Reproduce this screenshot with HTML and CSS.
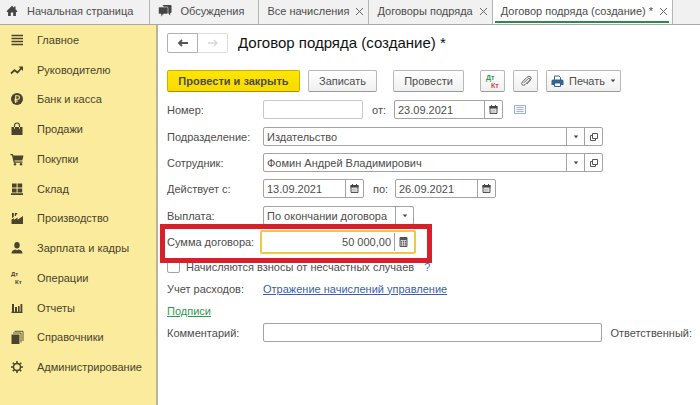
FILE: index.html
```html
<!DOCTYPE html>
<html lang="ru">
<head>
<meta charset="utf-8">
<title>Договор подряда (создание) *</title>
<link rel="stylesheet" href="styles.css">
</head>
<body>
<svg class="defs" aria-hidden="true">
  <symbol id="cal" viewBox="0 0 9 9"><path d="M1 1.500h7v7H1z" fill="#ddd" stroke="#555"/><path d="M.5 1h8v2.500h-8zM2 0h1v2H2zM6 0h1v2H6z" fill="#444"/><path d="M2.500 5.500h4M2.500 7h4" stroke="#999" stroke-width=".8" stroke-dasharray="1 1"/></symbol>
  <symbol id="open" viewBox="0 0 10 10"><path d="M3.500 1.500h5v5h-5zM3 3.500H1.500v5h5V7" fill="none" stroke="#555"/></symbol>
  <symbol id="drop" viewBox="0 0 6 4"><path d="M.8.5h4.400L3 3.300z" fill="#444"/></symbol>
</svg>
<nav class="tabs">
  <a class="tab home" href="#"><svg width="12" height="12" viewBox="0 0 12 12"><path d="M6 .8L.5 6.300l1 .9.6-.5V11h2.700V7.500h2.400V11h2.700V6.700l.6.5 1-.9L9.500 4.200V1.500H8v1.200z" fill="#444"/></svg>Начальная страница</a>
  <a class="tab talk" href="#"><svg width="14" height="14" viewBox="0 0 14 14"><path d="M4.500 1h8q1 0 1 1v6q0 1-1 1h-.3v2.500L10 9" fill="#444"/><path d="M1.500 3h7.500q1 0 1 1v5q0 1-1 1H5.500L3 13v-3H1.500q-1 0-1-1V4q0-1 1-1z" fill="#444" stroke="#eee" stroke-width=".6"/></svg>Обсуждения</a>
  <a class="tab" href="#">Все начисления<span class="x"></span></a>
  <a class="tab" href="#">Договоры подряда<span class="x"></span></a>
  <a class="tab active" href="#" aria-current="page">Договор подряда (создание) *<span class="x"></span></a>
</nav>
<div class="app">
  <nav class="side">
    <a href="#"><svg viewBox="0 0 14 14"><path d="M1.500 2.500h11.500M1.500 5.500h11.500M1.500 8.500h11.500M1.500 11.500h11.500" stroke="#4a442e" stroke-width="1.600"/></svg>Главное</a>
    <a href="#"><svg viewBox="0 0 14 14"><path d="M1 10.500l3.500-3.300L7.500 9.500 11.500 5" fill="none" stroke="#4a442e" stroke-width="1.800"/><path d="M8.500 3.500H13V8z" fill="#4a442e"/></svg>Руководителю</a>
    <a href="#"><svg viewBox="0 0 14 14"><circle cx="7" cy="7" r="6" fill="#4a442e"/><path d="M5.700 11V3.800h2q1.800 0 1.800 1.700T7.700 7.200H4.300M4.300 9h3.600" fill="none" stroke="#fbeb9c" stroke-width="1.100"/></svg>Банк и касса</a>
    <a href="#"><svg viewBox="0 0 14 14"><path d="M1.500 5h11v8h-11z" fill="#4a442e"/><path d="M4.500 7V3.500q0-2.500 2.500-2.500t2.500 2.500V7" fill="none" stroke="#4a442e" stroke-width="1.100"/><path d="M4.500 5v1.800M9.500 5v1.800" stroke="#fbeb9c" stroke-width=".8"/></svg>Продажи</a>
    <a href="#"><svg viewBox="0 0 14 14"><path d="M.5 2h2.300l.6 1.500h10.100l-1.200 5H4.500l.3 1h7.700v1.200H3.700L2 3.200H.5z" fill="#4a442e"/><circle cx="5" cy="12.300" r="1.200" fill="#4a442e"/><circle cx="11" cy="12.300" r="1.200" fill="#4a442e"/></svg>Покупки</a>
    <a href="#"><svg viewBox="0 0 14 14"><path d="M2 1.500h4.600v4H2zM7.600 1.500h4.600v4H7.600zM2 6.500h4.600v4H2zM7.600 6.500h4.600v4H7.600zM1 11.300h12V13H1z" fill="#4a442e"/></svg>Склад</a>
    <a href="#"><svg viewBox="0 0 14 14"><path d="M1.500 13V8.500L4 7.200v1.600l3.500-2.300v2.300L13 5v8zM2 2h1.800v4L2 7zM4.800 2h2.400v1.500H6V5H4.800z" fill="#4a442e"/></svg>Производство</a>
    <a href="#"><svg viewBox="0 0 14 14"><ellipse cx="7" cy="4.300" rx="2.700" ry="3.200" fill="#4a442e"/><path d="M1.500 12.500q0-3.300 4-4l1.500.8 1.500-.8q4 .7 4 4z" fill="#4a442e"/></svg>Зарплата и кадры</a>
    <a href="#"><svg class="dk" viewBox="0 0 14 14"><text x="1" y="5">Дт</text><text x="5" y="13">Кт</text></svg>Операции</a>
    <a href="#"><svg viewBox="0 0 14 14"><path d="M2 3h2v8H2zM5 6h2v5H5zM8 5h1.600v6H8zM10.500 3h1.800v8h-1.800zM1.500 10.700h11V12h-11z" fill="#4a442e"/></svg>Отчеты</a>
    <a href="#"><svg viewBox="0 0 14 14"><path d="M1.500 4.500h8V14h-8z" fill="#4a442e"/><path d="M3 3h8v9.500M4.500 1.300H13V11" fill="none" stroke="#4a442e" stroke-width=".9"/></svg>Справочники</a>
    <a href="#"><svg viewBox="0 0 14 14"><circle cx="7" cy="7" r="3.500" fill="none" stroke="#4a442e" stroke-width="1.500"/><path d="M7 1v2.500M7 10.500V13M1 7h2.500M10.500 7H13M2.800 2.800l1.700 1.700M9.500 9.500l1.700 1.700M2.800 11.200l1.700-1.700M9.500 4.500l1.700-1.700" stroke="#4a442e" stroke-width="1.600"/></svg>Администрирование</a>
  </nav>
  <main>
    <header>
      <div class="history">
        <button type="button" aria-label="Назад"><svg width="12" height="8" viewBox="0 0 12 8"><path d="M11 4H2M5 1L2 4l3 3" fill="none" stroke="#555" stroke-width="1.800"/></svg></button><button type="button" aria-label="Вперед" disabled><svg width="12" height="8" viewBox="0 0 12 8"><path d="M1 4h9M7 1l3 3-3 3" fill="none" stroke="#d8d8d8" stroke-width="1.400"/></svg></button>
      </div>
      <h1>Договор подряда (создание) *</h1>
    </header>
    <div class="toolbar">
      <button class="btn primary" type="button">Провести и закрыть</button>
      <button class="btn save" type="button">Записать</button>
      <button class="btn post" type="button">Провести</button>
      <button class="btn icon" type="button" aria-label="Проводки"><svg class="dk color" width="16" height="16" viewBox="0 0 16 16"><text x="1" y="7">Дт</text><text x="6" y="15">Кт</text></svg></button>
      <button class="btn icon" type="button" aria-label="Файлы"><svg width="12" height="12" viewBox="0 0 12 12"><path d="M3.500 8.200L8 3.700q1-.9 1.700-.2t-.2 1.700L5 9.700q-1.500 1.400-2.800.1T2.300 7L7 2.300q2-1.900 3.500-.5t-.3 3.700L6.800 9" fill="none" stroke="#555" stroke-width=".9"/></svg></button>
      <button class="btn print" type="button"><svg width="13" height="12" viewBox="0 0 13 12"><path d="M3.500 5V1h4.500l1.500 1.500V5" fill="#fff" stroke="#3a6690"/><path d="M2 4.500h9q1.500 0 1.500 1.500v4h-12V6q0-1.500 1.500-1.500z" fill="#35628f"/><path d="M3.500 8h6v3.500h-6z" fill="#fff" stroke="#35628f"/></svg>Печать<svg width="6" height="4"><use href="#drop"/></svg></button>
    </div>
    <form>
      <div class="row dates">
        <label class="cap" for="num">Номер:</label>
        <div class="field number"><input id="num"></div>
        <label class="mid" for="date">от:</label>
        <div class="field date long"><input id="date" value="23.09.2021"><button type="button" aria-label="Календарь"><svg width="9" height="9"><use href="#cal"/></svg></button></div>
        <svg class="note" width="12" height="10" viewBox="0 0 12 10"><path d="M.5.500h11v8H.5z" fill="#f3f6fa" stroke="#9fb2c6"/><path d="M2.500 2.500h7M2.500 4.500h7M2.500 6.500h7" stroke="#9fb2c6" stroke-width=".9"/></svg>
      </div>
      <div class="row">
        <label class="cap" for="dep">Подразделение:</label>
        <div class="field full"><input id="dep" value="Издательство"><button type="button" aria-label="Выбрать"><svg width="6" height="4"><use href="#drop"/></svg></button><button type="button" aria-label="Открыть"><svg width="10" height="10"><use href="#open"/></svg></button></div>
      </div>
      <div class="row">
        <label class="cap" for="emp">Сотрудник:</label>
        <div class="field full"><input id="emp" value="Фомин Андрей Владимирович"><button type="button" aria-label="Выбрать"><svg width="6" height="4"><use href="#drop"/></svg></button><button type="button" aria-label="Открыть"><svg width="10" height="10"><use href="#open"/></svg></button></div>
      </div>
      <div class="row dates">
        <label class="cap" for="from">Действует с:</label>
        <div class="field date"><input id="from" value="13.09.2021"><button type="button" aria-label="Календарь"><svg width="9" height="9"><use href="#cal"/></svg></button></div>
        <label class="mid" for="to">по:</label>
        <div class="field date"><input id="to" value="26.09.2021"><button type="button" aria-label="Календарь"><svg width="9" height="9"><use href="#cal"/></svg></button></div>
      </div>
      <div class="row pay">
        <label class="cap" for="pay">Выплата:</label>
        <div class="field choice"><select id="pay"><option>По окончании договора</option></select><span class="arrow"><svg width="6" height="4"><use href="#drop"/></svg></span></div>
      </div>
      <div class="row sum">
        <label class="cap" for="sum">Сумма договора:</label>
        <div class="field money"><input id="sum" value="50 000,00"><button type="button" aria-label="Калькулятор"><svg width="9" height="10" viewBox="0 0 9 10"><path d="M1 .5h7v9H1z" fill="#ccc" stroke="#555"/><path d="M1 1h7v2H1z" fill="#555"/><path d="M2 4.500h5M2 6.200h5M2 7.900h5" stroke="#555" stroke-dasharray="1 1"/></svg></button></div>
      </div>
      <div class="row check">
        <input type="checkbox" id="acc"><label for="acc">Начисляются взносы от несчастных случаев</label><a class="help" href="#">?</a>
      </div>
      <div class="row text">
        <span class="cap">Учет расходов:</span>
        <a class="link" href="#">Отражение начислений управление</a>
      </div>
      <div class="row text"><a class="link green" href="#">Подписи</a></div>
      <div class="row">
        <label class="cap" for="com">Комментарий:</label>
        <div class="field full"><input id="com"></div>
        <span class="resp">Ответственный:</span>
      </div>
    </form>
  </main>
</div>
</body>
</html>
```

FILE: styles.css
```css
*, *::before, *::after { box-sizing: border-box; }
body {
  margin: 0;
  min-height: 100vh;
  display: flex;
  flex-direction: column;
  background: #fff;
  color: #4d4d4d;
  font: 11px/16px "Liberation Sans", Arial, sans-serif;
  white-space: nowrap;
}
a { color: inherit; text-decoration: none; }
svg { flex: none; display: block; }
.defs { position: absolute; width: 0; height: 0; }
button, input, select { font: inherit; color: inherit; margin: 0; }

.tabs { display: flex; height: 25px; background: #f1f1f1; border-bottom: 1px solid #a8a8a8; }
.tab { display: flex; align-items: center; padding: 0 5px 2px 8px; border-right: 1px solid #b5b5b5; }
.tab.home { padding-left: 6px; padding-right: 16px; gap: 9px; }
.tab.talk { padding-right: 14px; gap: 8px; }
.tab.active { background: #fff linear-gradient(#2d8a4e, #2d8a4e) center 21px / calc(100% - 5px) 2px no-repeat; }
.x { width: 7px; height: 7px; margin-left: 7px; background: linear-gradient(45deg, transparent 44%, #666 44% 56%, transparent 56%), linear-gradient(-45deg, transparent 44%, #666 44% 56%, transparent 56%); }

.app { display: flex; flex: 1; }
.side { width: 158px; flex: none; padding-bottom: 23px; display: flex; flex-direction: column; background: #fbeb9c; border-right: 2px solid #b9b49e; color: #4a442e; }
.side a { flex: 1; display: flex; align-items: center; gap: 13px; padding-left: 10px; }
.side svg { width: 14px; height: 14px; }
.dk { font: bold 6px/1 "Liberation Sans", Arial, sans-serif; fill: #4a442e; }
.dk.color { font-size: 7px; fill: #d0484c; }
.dk.color text:first-child { fill: #2b9b55; }

main { flex: 1; min-width: 0; padding: 7px 8px 0 9px; }
header { display: flex; align-items: center; height: 21px; gap: 10px; }
.history { display: flex; height: 20px; }
.history button { width: 31px; display: flex; align-items: center; justify-content: center; padding: 0; background: #fff; border: 1px solid #b0b0b0; border-radius: 2px 0 0 2px; }
.history button:disabled { width: 30px; border-color: #dcdcdc; border-left: 0; border-radius: 0 2px 2px 0; }
h1 { margin: 0; font-size: 15px; line-height: 20px; font-weight: normal; color: #111; }

.toolbar { display: flex; gap: 8px; margin: 17px 0 8px; }
.btn { height: 22px; display: flex; align-items: center; justify-content: center; padding: 0 10px; border: 1px solid #b8b8b8; border-bottom-color: #999; border-radius: 2px; background: linear-gradient(#fff, #f0f0f0); }
.btn.primary { width: 133px; font-weight: bold; background: linear-gradient(#ffe600, #f8da00); border-color: #cfb000; border-bottom-color: #a89000; }
.btn.save { width: 69px; }
.btn.post { width: 71px; margin: 0 8px; }
.btn.icon { width: 25px; padding: 0; }
.btn.print { width: 75px; gap: 5px; padding: 0 5px; }

.row { display: flex; align-items: center; height: 19px; margin-bottom: 7px; }
.row.dates { margin-bottom: 8px; }
.row.pay { margin-bottom: 5px; }
.cap { width: 96px; flex: none; }
.mid { width: 31px; padding-left: 9px; flex: none; }
.field { display: flex; height: 19px; border: 1px solid #a3a3a3; border-radius: 2px; background: #fff; }
.field input, .field select { flex: 1; min-width: 0; width: 0; border: 0; outline: 0; padding: 0 3px; background: none; appearance: none; }
.field button, .arrow { width: 18px; flex: none; display: flex; align-items: center; justify-content: center; padding: 0; border: 0; border-left: 1px solid #a3a3a3; background: none; }
.field.number { width: 100px; border-color: #c8c8c8; }
.field.date { width: 101px; }
.field.date.long { width: 109px; }
.field.full { width: 340px; }
.field.choice { width: 151px; }
.note { margin-left: 11px; }

.row.sum { position: relative; height: 24px; margin-bottom: 3px; }
.row.sum::after { content: ""; position: absolute; left: -7px; top: -6px; width: 272px; height: 39px; border: 5px solid #d7202a; pointer-events: none; }
.field.money { width: 156px; height: 24px; margin-left: -3px; border: 2px solid #efc84a; padding: 1px 0; }
.field.money input { text-align: right; }
.field.money button { margin-right: 2px; }

.row.check { margin-bottom: 3px; }
.check input { appearance: none; width: 13px; height: 13px; margin-right: 6px; border: 1px solid #a3a3a3; border-radius: 2px; background: #fff; }
.help { margin-left: 10px; color: #3b73b5; }
.row.text { margin-bottom: 3px; }
.link { color: #3a5fa8; text-decoration: underline; }
.link.green { color: #2f9a50; }
.resp { margin-left: 8px; }
```
